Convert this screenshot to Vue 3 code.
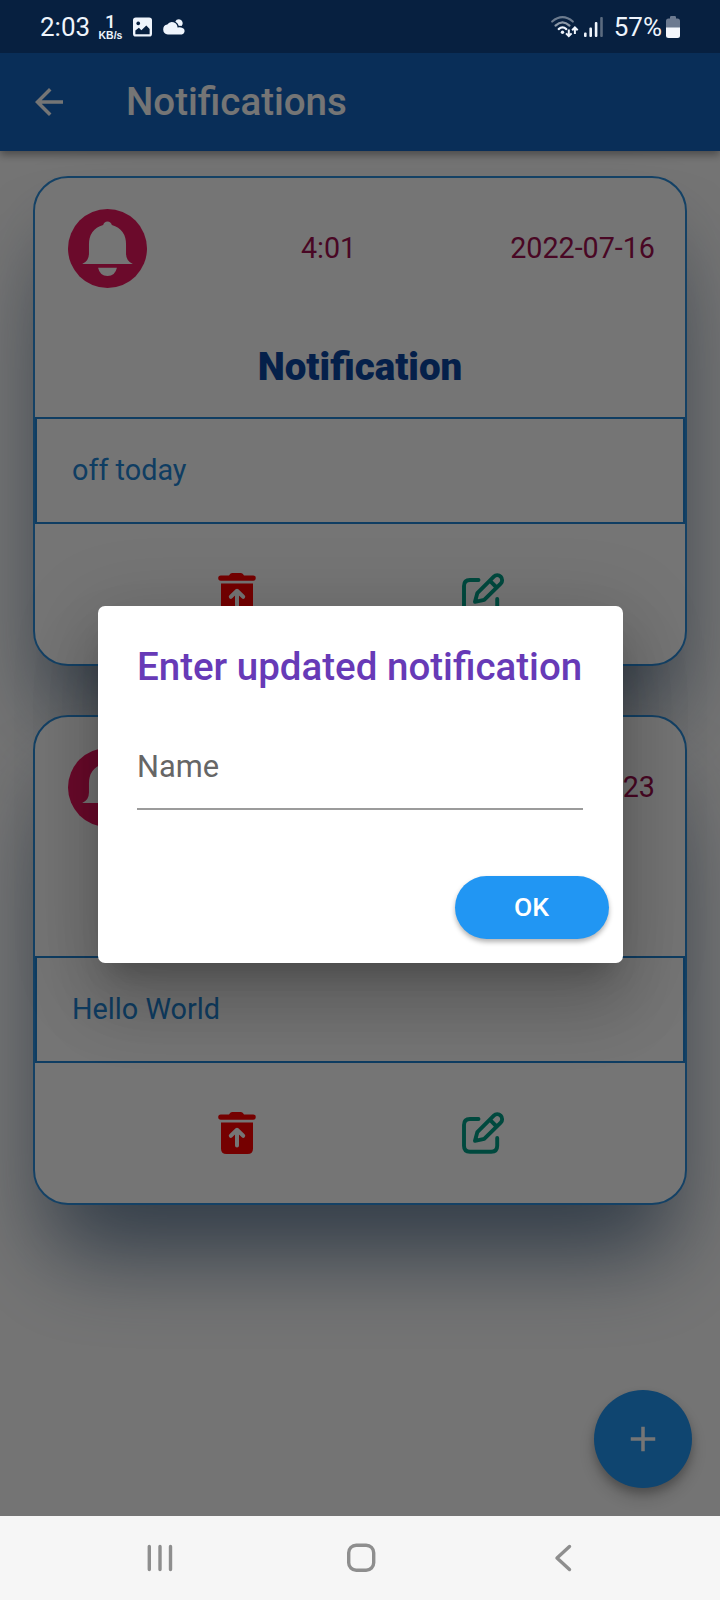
<script setup>
const notifications = [
  { time: '4:01', date: '2022-07-16', text: 'off today' },
  { time: '4:01', date: '2022-07-23', text: 'Hello World' },
]
</script>

<template>
  <div class="screen">
    <header class="status">
      <span class="clock">2:03</span>
      <span class="speed"><b>1</b><small>KB/s</small></span>
      <svg class="picture" viewBox="0 0 20 20">
        <path fill-rule="evenodd" d="M3 0H17Q20 0 20 3V17Q20 20 17 20H3Q0 20 0 17V3Q0 0 3 0ZM2.500 13.800V17.500H17.500V12L14 8.500L8.800 13.400L6.200 10.800ZM5.500 4.200a2 2 0 1 0 .01 0Z" />
      </svg>
      <svg class="cloud" viewBox="0 0 22 16">
        <path d="M12.300 2.600a3.900 3.900 0 0 1 7.200.3a4 4 0 0 1-.9 4.200q-1.500-.5-2.700-.2q-.9-2.700-3.600-4.300Z" />
        <path d="M4.800 15.500a5 5 0 0 1-.5-9.900a5.500 5.500 0 0 1 10.200 2.900q4-1 6.300 1.300a3.600 3.600 0 0 1-2 5.700Z" />
      </svg>
      <span class="spacer"></span>
      <svg class="wifi" viewBox="0 0 28 22">
        <g fill="none" stroke-width="2.200" stroke-linecap="round">
          <path stroke="#6c7b8e" d="M1.200 5.500Q11.500-3.200 21.800 5.500" />
          <path stroke="#8d99a8" d="M4.500 9.600Q11.500 3.200 18.500 9.600" />
          <path stroke="#eef4fc" d="M7.700 13.100Q11.500 9.600 15.300 13.100" />
        </g>
        <circle cx="11.500" cy="16.300" r="1.700" fill="#eef4fc" />
        <path fill="none" stroke="#eef4fc" stroke-width="2" d="M17.800 13.500V20M15 17.400L17.800 20.200L20.600 17.400M23.900 18V12M21.100 14.300L23.900 11.500L26.700 14.300" />
      </svg>
      <svg class="signal" viewBox="0 0 20 20">
        <g fill="#eef4fc">
          <rect x="0" y="15.500" width="2.600" height="4.500" rx="1" />
          <rect x="5.400" y="10.500" width="2.600" height="9.500" rx="1" />
          <rect x="10.800" y="5" width="2.600" height="15" rx="1" />
        </g>
        <rect x="16.200" y="0" width="2.600" height="20" rx="1" fill="#5b6b7f" />
      </svg>
      <span class="percent">57%</span>
      <svg class="battery" viewBox="0 0 14 22">
        <path fill="#6c7a90" d="M4 2.500V1.200Q4 0 5.200 0H8.800Q10 0 10 1.200V2.500H11.500Q14 2.500 14 5V12H0V5Q0 2.500 2.500 2.500Z" />
        <path fill="#f4f7fc" d="M0 11.500H14V19.500Q14 22 11.500 22H2.500Q0 22 0 19.500Z" />
      </svg>
    </header>

    <div class="app">
      <div class="bar">
        <svg class="back" viewBox="0 0 24 24"><path d="M20 11H7.830l5.590-5.590L12 4l-8 8 8 8 1.410-1.410L7.830 13H20v-2z" /></svg>
        <h1>Notifications</h1>
      </div>

      <main class="list">
        <article v-for="item in notifications" :key="item.date" class="card">
          <div class="meta">
            <svg class="bell" viewBox="0 0 78 78">
              <circle cx="39" cy="39" r="39" fill="#ea165e" />
              <path fill="#fff" d="M39 12.300Q42.300 12.300 43.300 15.800Q57.300 20 57.300 35V44Q57.300 51.500 64 54.300H14Q20.700 51.500 20.700 44V35Q20.700 20 34.700 15.800Q35.700 12.300 39 12.300Z" />
              <path fill="#fff" d="M29.700 58H48.300Q46.500 66.200 39 66.200Q31.500 66.200 29.700 58Z" />
            </svg>
            <span>{{ item.time }}</span>
            <span>{{ item.date }}</span>
          </div>
          <h2>Notification</h2>
          <p class="message">{{ item.text }}</p>
          <div class="actions">
            <span class="action">
              <svg viewBox="0 0 48 48">
                <path fill="#ff0000" d="M16 5.500Q17 3 19 3H28Q30 3 31 5.500H40.200a2.600 2.600 0 0 1 0 5.200H7.800a2.600 2.600 0 0 1 0-5.200Z" />
                <path fill="#ff0000" d="M8 13.400H40V39.500Q40 45 34.500 45H13.500Q8 45 8 39.500Z" />
                <path fill="none" stroke="#fff" stroke-width="4" stroke-linecap="round" stroke-linejoin="round" d="M24 36.500V21M17.800 26.800L24 20.800L30.200 26.800" />
              </svg>
            </span>
            <span class="action">
              <svg viewBox="0 0 48 48">
                <g fill="none" stroke="#00a088" stroke-width="3.900" stroke-linecap="round" stroke-linejoin="round">
                  <path d="M19.500 10H11Q5 10 5 16V36.800Q5 42.800 11 42.800H32.200Q38.200 42.800 38.200 36.800V29" />
                  <path d="M16 31.800L18.300 23.200L34.800 6.700A4.700 4.700 0 0 1 41.700 13.600L25.200 29.800ZM30.800 10.700L37.600 17.500" />
                </g>
              </svg>
            </span>
          </div>
        </article>
      </main>
      <button class="fab"><svg viewBox="0 0 24 24"><path d="M19 13h-6v6h-2v-6H5v-2h6V5h2v6h6v2z" /></svg></button>
    </div>

    <div class="scrim">
      <section class="dialog">
        <h3>Enter updated notification</h3>
        <div class="field">Name</div>
        <button class="ok">OK</button>
      </section>
    </div>

    <nav class="nav">
      <svg viewBox="0 0 32 32"><path d="M5.300 4.500V27.500M16 4.500V27.500M26.500 4.500V27.500" /></svg>
      <svg viewBox="0 0 32 32"><rect x="3.700" y="3.200" width="25" height="25" rx="7.500" /></svg>
      <svg viewBox="0 0 32 32"><path d="M23.500 4.500L11 16L23.500 27.500" /></svg>
    </nav>
  </div>
</template>

<style>
body { margin: 0; }
</style>

<style scoped>
.screen {
  position: relative;
  width: 720px;
  height: 1600px;
  overflow: hidden;
  display: flex;
  flex-direction: column;
  font-family: Roboto, "Liberation Sans", sans-serif;
}
h1, h2, h3, p { margin: 0; }
button { border: 0; padding: 0; font-family: inherit; }
svg { display: block; flex: none; }

.status {
  position: relative;
  z-index: 3;
  box-sizing: border-box;
  height: 53px;
  flex: none;
  display: flex;
  align-items: center;
  padding: 0 40px 0 40px;
  background: #072040;
  color: #eef4fc;
  fill: #eef4fc;
}
.clock, .percent { font-size: 26px; line-height: 30px; }
.clock { width: 58px; }
.speed {
  width: 25px;
  display: flex;
  flex-direction: column;
  align-items: center;
  font-family: "Liberation Sans", sans-serif;
  font-weight: 700;
}
.speed b { font-size: 19px; line-height: 17px; font-weight: 500; font-family: Roboto, sans-serif; }
.speed small { font-size: 10.500px; line-height: 11px; }
.picture { width: 19px; height: 20px; margin-left: 10px; }
.cloud { width: 22px; height: 16px; margin-left: 11px; }
.spacer { flex: 1; }
.wifi { width: 28px; height: 22px; }
.signal { width: 20px; height: 20px; margin-left: 5px; }
.percent { margin: 0 4px 0 10px; }
.battery { width: 14px; height: 22px; }

.app {
  position: relative;
  height: 1463px;
  flex: none;
  background: #fdfdfd;
}
.bar {
  position: relative;
  z-index: 1;
  height: 98px;
  display: flex;
  align-items: center;
  padding-left: 28px;
  background: #1565c0;
  box-shadow: 0 4px 8px rgba(0, 0, 0, 0.35);
  color: #fff;
}
.back { width: 42px; height: 42px; fill: #fff; }
h1 { margin-left: 56px; font-size: 38.500px; line-height: 46px; font-weight: 500; }

.list {
  display: flex;
  flex-direction: column;
  gap: 49px;
  padding: 25px 33px 0;
}
.card {
  box-sizing: border-box;
  height: 490px;
  border: 2px solid #2d8fdd;
  border-radius: 35px;
  background: #fefefe;
  box-shadow: 0 72px 92px -24px rgba(28, 68, 108, 0.56), 0 40px 70px -4px rgba(45, 55, 80, 0.18);
}
.meta {
  height: 78px;
  margin-top: 31px;
  padding: 0 30px 0 33px;
  box-sizing: border-box;
  display: flex;
  align-items: center;
  justify-content: space-between;
  color: #a01050;
  font-size: 28.700px;
}
.bell { width: 79px; height: 79px; }
h2 {
  height: 130px;
  text-align: center;
  font-size: 38.500px;
  line-height: 160px;
  font-weight: 900;
  color: #0d47a1;
}
.message {
  box-sizing: border-box;
  height: 107px;
  border: 2px solid #2286d6;
  padding-left: 35px;
  font-size: 28.800px;
  line-height: 103px;
  color: #2286d6;
}
.actions { height: 139px; display: flex; align-items: center; justify-content: space-evenly; }
.action { width: 88px; display: flex; justify-content: center; }
.action svg { width: 48px; height: 48px; }

.fab {
  position: absolute;
  right: 28px;
  bottom: 28px;
  width: 98px;
  height: 98px;
  border-radius: 50%;
  display: grid;
  place-items: center;
  background: #2196f3;
  box-shadow: 0 10px 18px rgba(0, 0, 0, 0.18), 0 5px 8px rgba(0, 0, 0, 0.2);
}
.fab svg { width: 42px; height: 42px; fill: #fff; }

.scrim {
  position: absolute;
  inset: 53px 0 84px;
  z-index: 2;
  background: rgba(0, 0, 0, 0.54);
}
.dialog {
  box-sizing: border-box;
  width: 525px;
  height: 357px;
  margin: 553px auto 0;
  padding: 36px 14px 0 39.500px;
  display: flex;
  flex-direction: column;
  border-radius: 7px;
  background: #fff;
  box-shadow: 0 19px 26px -12px rgba(0, 0, 0, 0.2), 0 42px 66px 5px rgba(0, 0, 0, 0.14), 0 16px 80px 14px rgba(0, 0, 0, 0.12);
}
h3 { font-size: 38.500px; line-height: 50px; font-weight: 500; color: #673ab7; white-space: nowrap; }
.field {
  box-sizing: border-box;
  width: 446px;
  height: 86px;
  margin-top: 32px;
  border-bottom: 2px solid #9b9b9b;
  font-size: 30.800px;
  line-height: 86px;
  color: #666;
}
.ok {
  align-self: flex-end;
  width: 154px;
  height: 63px;
  margin-top: 66px;
  padding-bottom: 2px;
  border-radius: 32px;
  background: #2196f3;
  color: #fff;
  font-size: 26.500px;
  font-weight: 500;
  box-shadow: 0 3px 5px rgba(0, 0, 0, 0.3);
}

.nav {
  height: 84px;
  flex: none;
  display: flex;
  align-items: center;
  justify-content: space-between;
  padding: 0 142px 0 144px;
  background: #f6f6f6;
}
.nav svg { width: 32px; height: 32px; fill: none; stroke: #8e8e8e; stroke-width: 3.400; stroke-linecap: round; stroke-linejoin: round; }
</style>
